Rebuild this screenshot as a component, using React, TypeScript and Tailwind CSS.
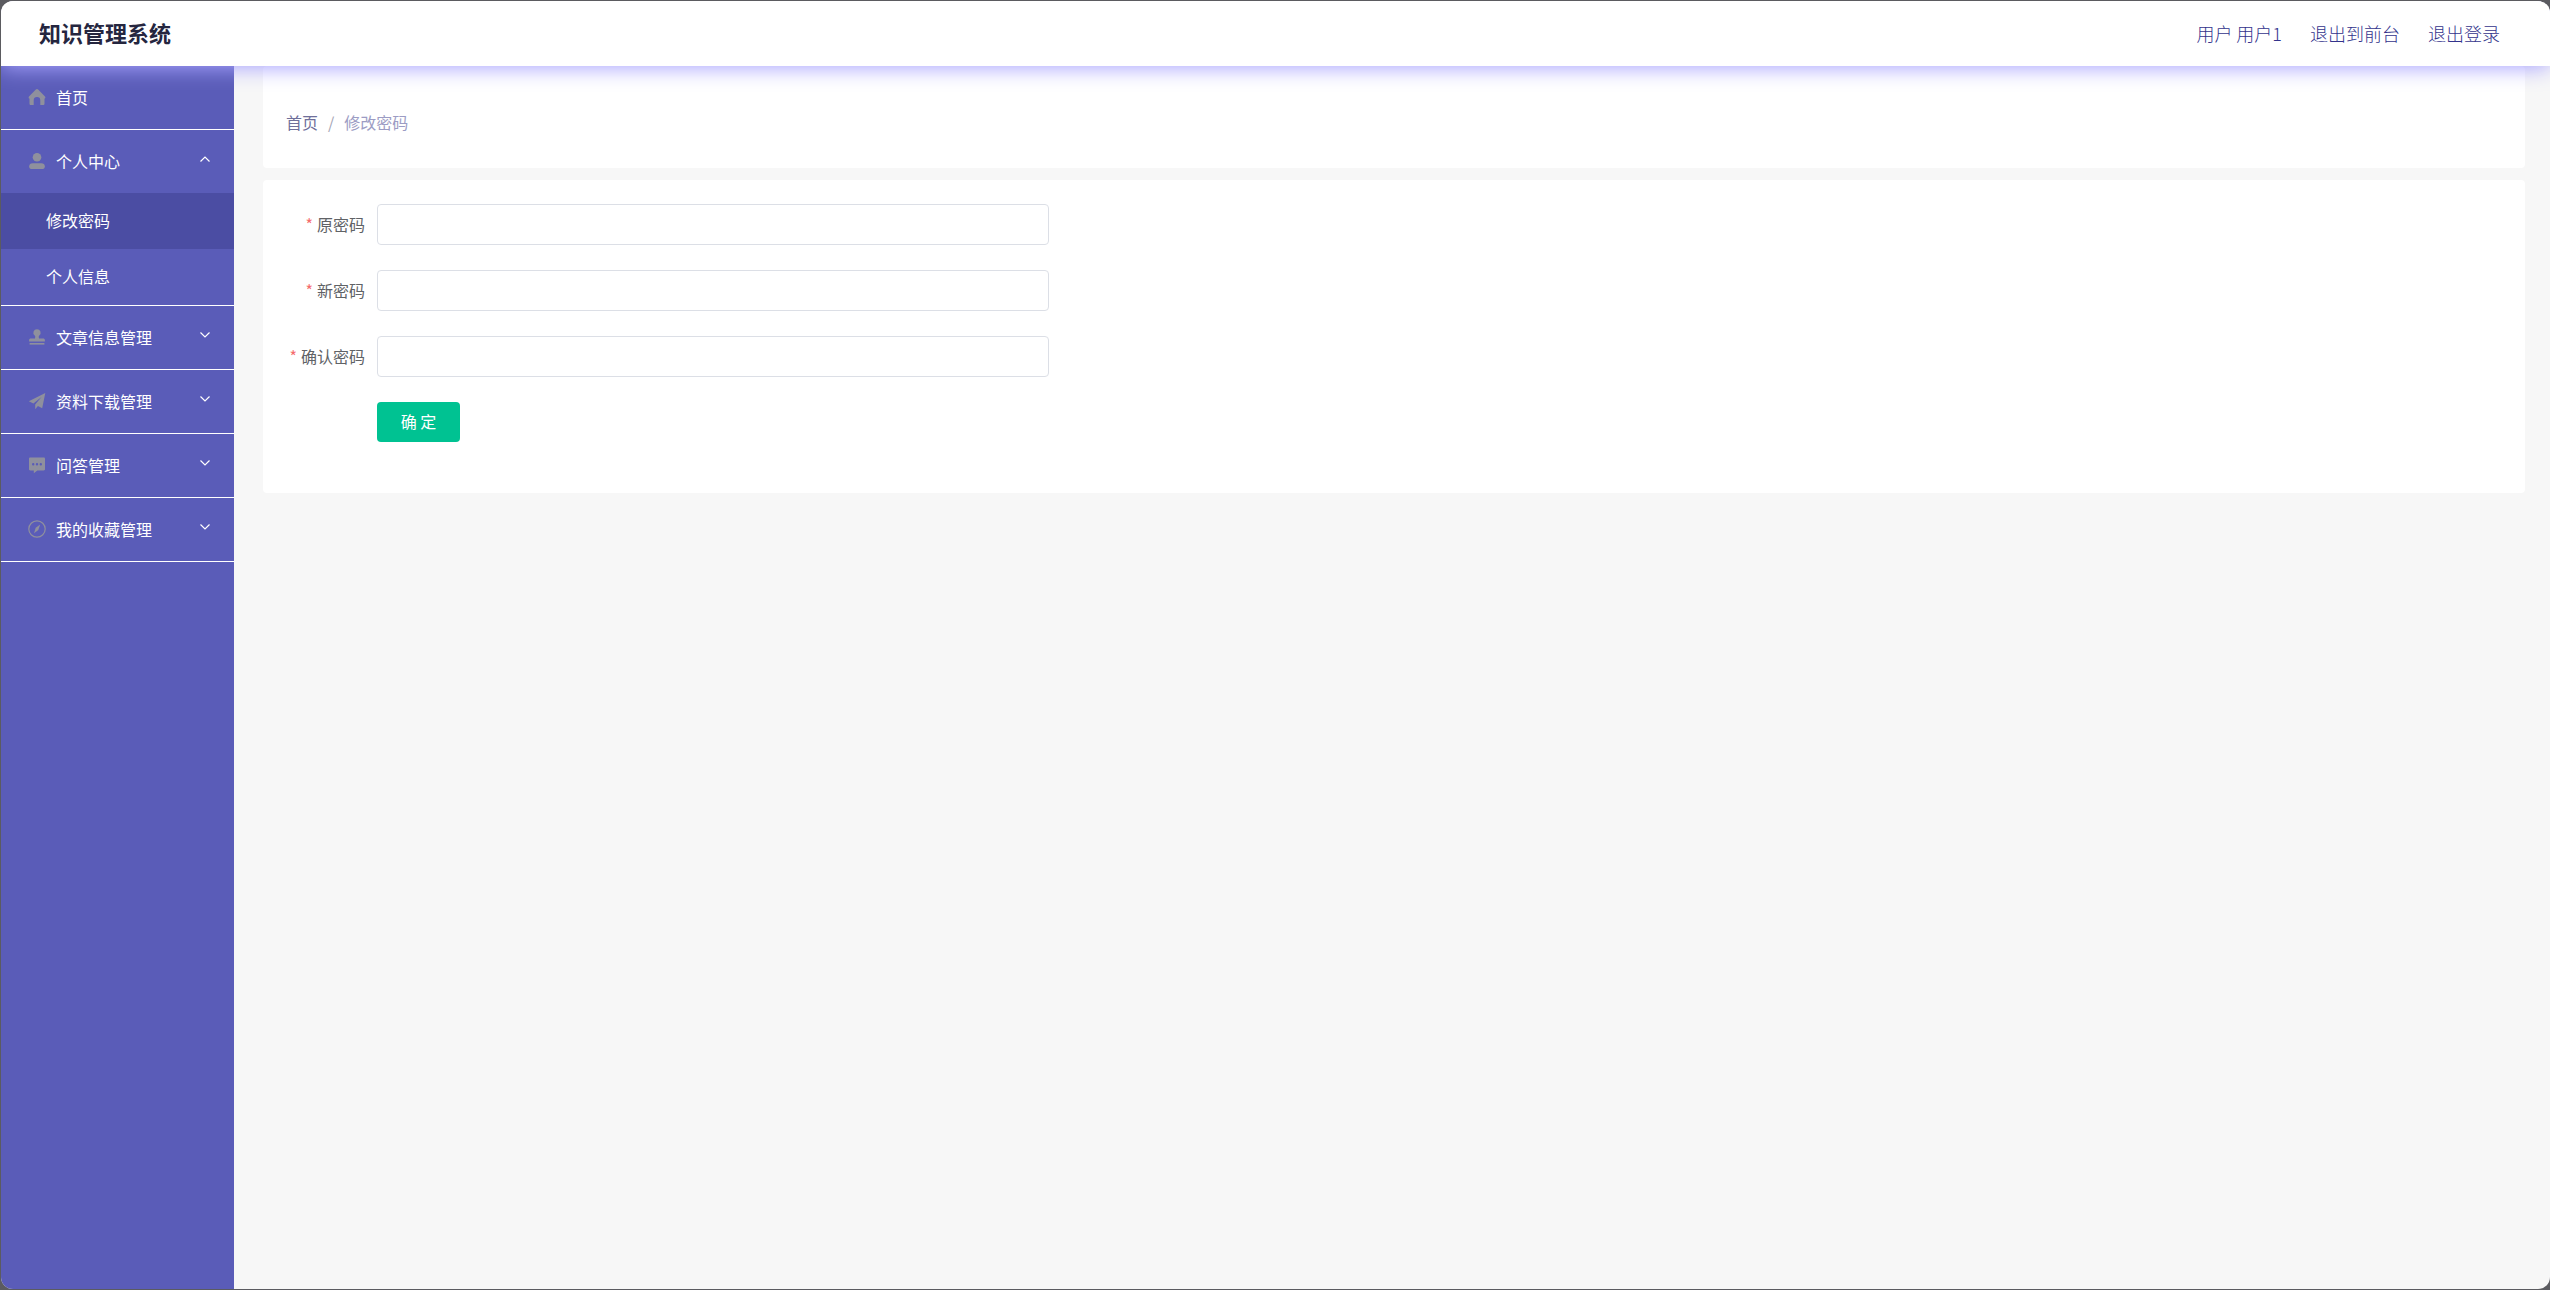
import React, { useState } from 'react';

interface SubItem {
    label: string;
    active?: boolean;
}

interface MenuItem {
    label: string;
    icon: React.ReactNode;
    children?: SubItem[];
}

const HomeIcon = () => (
    <svg viewBox="0 0 18 18" className="size-[18px]" fill="currentColor">
        <path d="M7.6 1.8a2 2 0 0 1 2.8 0l6.6 6.6c.8.9.3 2-.5 2.2v4.8c0 .9-.6 1.6-1.5 1.6h-2.7v-4.6a3.3 3.3 0 0 0-6.6 0V17H3c-.9 0-1.5-.7-1.5-1.6v-4.8c-.8-.2-1.3-1.3-.5-2.2z" />
    </svg>
);

const UserIcon = () => (
    <svg viewBox="0 0 18 18" className="size-[18px]" fill="currentColor">
        <circle cx="9" cy="5.2" r="4.3" />
        <path d="M1.2 14.3c0-2 1.4-3 3.4-3h8.8c2 0 3.4 1 3.4 3 0 1.7-.7 2.7-2 2.7H3.2c-1.3 0-2-1-2-2.7z" />
    </svg>
);

const StampIcon = () => (
    <svg viewBox="0 0 18 18" className="size-[18px]" fill="currentColor">
        <path d="M9 1.2a3.6 3.6 0 0 1 2.3 6.4c-.6.6-.8 2-.2 2.8H15c1.2 0 1.9.6 1.9 1.6v1.6H1.1V12c0-1 .7-1.6 1.9-1.6h3.9c.6-.8.4-2.2-.2-2.8A3.6 3.6 0 0 1 9 1.2z" />
        <path d="M1.6 15h14.8v1.6H1.6z" />
    </svg>
);

const PlaneIcon = () => (
    <svg viewBox="0 0 18 18" className="size-[18px]" fill="currentColor">
        <path d="M17.3 1 .8 9.2l4.6 2.3L13.5 5l-6.3 7.4v4.9l2.7-3.3 4.3 2.2z" />
    </svg>
);

const ChatIcon = () => (
    <svg viewBox="0 0 18 18" className="size-[18px]" fill="currentColor">
        <path
            fillRule="evenodd"
            d="M2.2 1.5h13.6c.7 0 1.2.5 1.2 1.2v10.6c0 .7-.5 1.2-1.2 1.2H9.4l-3.6 2.8v-2.8H2.2c-.7 0-1.2-.5-1.2-1.2V2.7c0-.7.5-1.2 1.2-1.2zM5.2 7a1.2 1.2 0 1 0 0 2.4 1.2 1.2 0 0 0 0-2.4zM9 7a1.2 1.2 0 1 0 0 2.4A1.2 1.2 0 0 0 9 7zm3.8 0a1.2 1.2 0 1 0 0 2.4 1.2 1.2 0 0 0 0-2.4z"
        />
    </svg>
);

const CompassIcon = () => (
    <svg viewBox="0 0 18 18" className="size-[18px]" fill="none" stroke="currentColor">
        <circle cx="9" cy="9" r="8.2" strokeWidth="1.2" />
        <path d="M12.2 4.6 7.7 7.8 6 13.2l4.3-3.3z" fill="currentColor" stroke="none" />
    </svg>
);

const Chevron = ({ open }: { open: boolean }) => (
    <svg
        viewBox="0 0 12 12"
        className={open ? 'mb-1 size-3 rotate-180' : 'mb-1 size-3'}
        fill="none"
        stroke="currentColor"
        strokeWidth="1.2"
    >
        <path d="M1.5 3.5 6 8l4.5-4.5" />
    </svg>
);

const MENU: MenuItem[] = [
    { label: '首页', icon: <HomeIcon /> },
    {
        label: '个人中心',
        icon: <UserIcon />,
        children: [{ label: '修改密码', active: true }, { label: '个人信息' }]
    },
    { label: '文章信息管理', icon: <StampIcon />, children: [] },
    { label: '资料下载管理', icon: <PlaneIcon />, children: [] },
    { label: '问答管理', icon: <ChatIcon />, children: [] },
    { label: '我的收藏管理', icon: <CompassIcon />, children: [] }
];

const FIELDS = [
    { id: 'old-password', label: '原密码' },
    { id: 'new-password', label: '新密码' },
    { id: 'confirm-password', label: '确认密码' }
];

function Header() {
    return (
        <header className="relative z-10 flex h-[65px] shrink-0 items-center justify-between bg-white pr-[50px] pb-0.5 pl-[38px] shadow-[0_2px_20px_#a9a4ff]">
            <h1 className="text-[22px] font-bold text-[#25263f]">知识管理系统</h1>
            <nav className="flex gap-7 text-lg font-light text-[#33338c]">
                <span>用户 用户1</span>
                <a href="#front">退出到前台</a>
                <a href="#logout">退出登录</a>
            </nav>
        </header>
    );
}

function Sidebar() {
    const [openItem, setOpenItem] = useState('个人中心');

    return (
        <aside className="w-[233px] shrink-0 bg-[#5a5cb8] text-base text-white">
            <ul>
                {MENU.map((item) => {
                    const open = item.label === openItem;
                    return (
                        <li key={item.label} className="border-b border-white">
                            <button
                                type="button"
                                onClick={() => setOpenItem(open ? '' : item.label)}
                                className="flex h-[63px] w-full items-center pr-[23px] pb-0.5 pl-[27px]"
                            >
                                <span className="text-[#8f909d]">{item.icon}</span>
                                <span className="ml-2.5 flex-1 text-left">{item.label}</span>
                                {item.children && <Chevron open={open} />}
                            </button>
                            {open &&
                                item.children?.map((sub) => (
                                    <a
                                        key={sub.label}
                                        href="#"
                                        className={
                                            sub.active
                                                ? 'flex h-14 items-center bg-[#4b4da3] pb-0.5 pl-[45px]'
                                                : 'flex h-14 items-center pb-0.5 pl-[45px]'
                                        }
                                    >
                                        {sub.label}
                                    </a>
                                ))}
                        </li>
                    );
                })}
            </ul>
        </aside>
    );
}

function PasswordForm() {
    return (
        <form
            className="flex min-h-[313px] flex-col rounded-sm bg-white p-6"
            onSubmit={(e) => e.preventDefault()}
        >
            {FIELDS.map((field) => (
                <div key={field.id} className="mb-[25px] flex w-full max-w-[762px] items-center">
                    <label
                        htmlFor={field.id}
                        className="w-[90px] shrink-0 pr-3 pb-0.5 text-right text-base whitespace-nowrap text-[#606266]"
                    >
                        <span className="mr-1 text-[#f56c6c]">*</span>
                        {field.label}
                    </label>
                    <input
                        id={field.id}
                        type="password"
                        className="h-[41px] min-w-0 flex-1 rounded border border-[#dcdfe6] bg-white px-4 text-base outline-none"
                    />
                </div>
            ))}
            <button
                type="submit"
                className="ml-[90px] h-10 w-[83px] rounded bg-[#00c292] pb-0.5 text-base text-white"
            >
                确 定
            </button>
        </form>
    );
}

export default function App() {
    return (
        <div className="min-h-screen bg-[#5b5b60] py-px pl-px font-['Noto_Sans_CJK_SC',sans-serif]">
            <div className="flex min-h-[calc(100vh-2px)] flex-col overflow-hidden rounded-xl bg-[#f7f7f7]">
                <Header />
                <div className="flex flex-1">
                    <Sidebar />
                    <main className="flex min-w-0 flex-1 flex-col gap-3 pr-[25px] pl-[29px]">
                        <nav className="flex h-[102px] items-center rounded-sm bg-white px-[23px] pt-2.5 text-base">
                            <a href="#" className="text-[#6f6f9a]">
                                首页
                            </a>
                            <span className="mx-2.5 text-[#a5a5b5]">/</span>
                            <span className="text-[#9c9cc4]">修改密码</span>
                        </nav>
                        <PasswordForm />
                    </main>
                </div>
            </div>
        </div>
    );
}
